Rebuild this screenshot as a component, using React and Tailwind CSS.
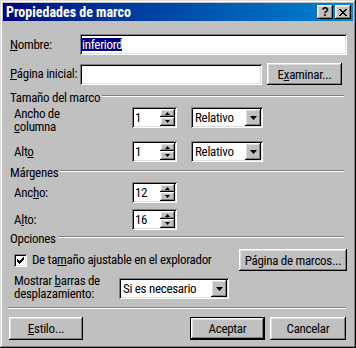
import React from 'react';

const sunken = 'shadow-[inset_1px_1px_#808080,inset_-1px_-1px_#ffffff,inset_2px_2px_#000000,inset_-2px_-2px_#dfdfdf]';
const raised = 'shadow-[inset_-1px_-1px_#000000,inset_1px_1px_#ffffff,inset_-2px_-2px_#808080,inset_2px_2px_#dfdfdf]';

const U = ({ children }) => <span className="underline underline-offset-[1px]">{children}</span>;

const Button = ({ children, className = '', isDefault = false }) => (
  <div
    className={`flex items-center justify-center whitespace-nowrap bg-[#c0c0c0] ${raised} ${isDefault ? 'border border-black' : ''} ${className}`}
  >
    <span className="leading-[13px]">{children}</span>
  </div>
);

const GroupHeader = ({ children }) => (
  <div className="flex h-[13px] leading-[13px] whitespace-nowrap">
    <span>{children}</span>
    <div className="ml-[2px] mr-[3px] mt-[4px] h-[2px] flex-1 border-t border-b border-t-[#808080] border-b-white" />
  </div>
);

const SpinBox = ({ value }) => (
  <div className={`flex h-[21px] w-[45px] bg-white ${sunken} p-[2px]`}>
    <span className="flex-1 pl-[1px] leading-[17px]">{value}</span>
    <div className="flex w-[15px] flex-col">
      <div className={`flex h-[8px] items-center justify-center bg-[#c0c0c0] ${raised}`}>
        <svg width="5" height="3" viewBox="0 0 5 3"><polygon points="2.5,0 5,3 0,3" fill="#000" /></svg>
      </div>
      <div className={`flex h-[9px] items-center justify-center bg-[#c0c0c0] ${raised}`}>
        <svg width="5" height="3" viewBox="0 0 5 3"><polygon points="0,0 5,0 2.5,3" fill="#000" /></svg>
      </div>
    </div>
  </div>
);

const Select = ({ value, className = '' }) => (
  <div className={`flex h-[21px] bg-white ${sunken} p-[2px] ${className}`}>
    <span className="flex-1 whitespace-nowrap pl-[2px] leading-[17px]">{value}</span>
    <div className={`flex h-[17px] w-[16px] items-center justify-center bg-[#c0c0c0] ${raised}`}>
      <svg width="7" height="4" viewBox="0 0 7 4"><polygon points="0,0 7,0 3.5,4" fill="#000" /></svg>
    </div>
  </div>
);

export default function App() {
  return (
    <div className="h-[348px] w-[356px] bg-[#c0c0c0] p-[3px] text-[13px] tracking-[-0.3px] text-black font-['Roboto_Condensed',sans-serif] shadow-[inset_-1px_-1px_#0a0a0a,inset_1px_1px_#dfdfdf,inset_-2px_-2px_#808080,inset_2px_2px_#ffffff]">
      {/* title bar */}
      <div className="flex h-[18px] items-center justify-between bg-gradient-to-r from-[#000080] to-[#1084d0] pl-[3px] pr-[2px]">
        <span className="text-[14px] font-bold leading-[14px] tracking-normal text-white">Propiedades de marco</span>
        <div className="flex gap-[2px]">
          <div className={`flex h-[14px] w-[16px] items-center justify-center bg-[#c0c0c0] ${raised}`}>
            <span className="text-[12px] font-bold leading-[12px] font-['Liberation_Sans',sans-serif]">?</span>
          </div>
          <div className={`flex h-[14px] w-[16px] items-center justify-center bg-[#c0c0c0] ${raised}`}>
            <svg width="8" height="7" viewBox="0 0 8 7" shapeRendering="crispEdges">
              <path d="M0 0h2v1H0zM6 0h2v1H6zM1 1h2v1H1zM5 1h2v1H5zM2 2h4v1H2zM3 3h2v1H3zM2 4h4v1H2zM1 5h2v1H1zM5 5h2v1H5zM0 6h2v1H0zM6 6h2v1H6z" fill="#000" />
            </svg>
          </div>
        </div>
      </div>

      {/* body */}
      <div className="flex flex-col pl-[7px] pr-[6px]">
        <div className="mt-[13px] flex h-[21px] items-center">
          <span className="w-[70px] flex-none whitespace-nowrap"><U>N</U>ombre:</span>
          <div className={`flex h-[21px] flex-1 items-center bg-white ${sunken} pl-[2px]`}>
            <span className="bg-[#000080] leading-[13px] text-white">inferiord</span>
          </div>
        </div>

        <div className="mt-[8px] flex h-[22px] items-center">
          <span className="w-[70px] flex-none whitespace-nowrap"><U>P</U>ágina inicial:</span>
          <div className={`h-[21px] w-[182px] bg-white ${sunken}`} />
          <Button className="ml-[5px] h-[22px] w-[75px]">E<U>x</U>aminar...</Button>
        </div>

        <div className="mt-[6px]">
          <GroupHeader>Tamaño del marco</GroupHeader>
        </div>

        <div className="mt-[3px] flex items-start pl-[4px]">
          <div className="w-[118px] leading-[13px]">
            Ancho de<br /><U>c</U>olumna
          </div>
          <SpinBox value="1" />
          <Select value="Relativo" className="ml-[14px] w-[72px]" />
        </div>

        <div className="mt-[8px] flex h-[21px] items-center pl-[4px]">
          <span className="w-[118px]">Alt<U>o</U></span>
          <SpinBox value="1" />
          <Select value="Relativo" className="ml-[14px] w-[72px]" />
        </div>

        <div className="mt-[4px]">
          <GroupHeader>Márgenes</GroupHeader>
        </div>

        <div className="mt-[3px] flex h-[21px] items-center pl-[4px]">
          <span className="w-[118px]">Anc<U>h</U>o:</span>
          <SpinBox value="12" />
        </div>

        <div className="mt-[6px] flex h-[21px] items-center pl-[4px]">
          <span className="w-[118px]">A<U>l</U>to:</span>
          <SpinBox value="16" />
        </div>

        <div className="mt-[2px]">
          <GroupHeader>Opciones</GroupHeader>
        </div>

        <div className="mt-[4px] flex h-[22px] items-center pl-[4px]">
          <div className={`flex h-[13px] w-[13px] items-center justify-center bg-white ${sunken}`}>
            <svg width="7" height="7" viewBox="0 0 7 7" shapeRendering="crispEdges">
              <path d="M6 0h1v3H6zM5 1h1v3H5zM4 2h1v3H4zM3 3h1v3H3zM2 4h1v3H2zM1 3h1v3H1zM0 2h1v3H0z" fill="#000" />
            </svg>
          </div>
          <span className="ml-[5px] whitespace-nowrap">De ta<U>m</U>año ajustable en el explorador</span>
          <Button className="ml-auto h-[22px] w-[108px]">Página de marcos...</Button>
        </div>

        <div className="mt-[3px] flex items-start pl-[4px]">
          <div className="w-[105px] whitespace-nowrap leading-[13px]">
            Mostrar <U>b</U>arras de<br />desplazamiento:
          </div>
          <Select value="Si es necesario" className="mt-[4px] w-[110px]" />
        </div>

        <div className="ml-[-2px] mr-[1px] mt-[7px] h-[2px] border-t border-b border-t-[#808080] border-b-white" />

        <div className="ml-[-1px] mr-[1px] mt-[8px] flex h-[23px]">
          <Button className="w-[74px]"><U>E</U>stilo...</Button>
          <Button isDefault className="ml-auto w-[75px]">Aceptar</Button>
          <Button className="ml-[5px] w-[76px]">Cancelar</Button>
        </div>
      </div>
    </div>
  );
}
